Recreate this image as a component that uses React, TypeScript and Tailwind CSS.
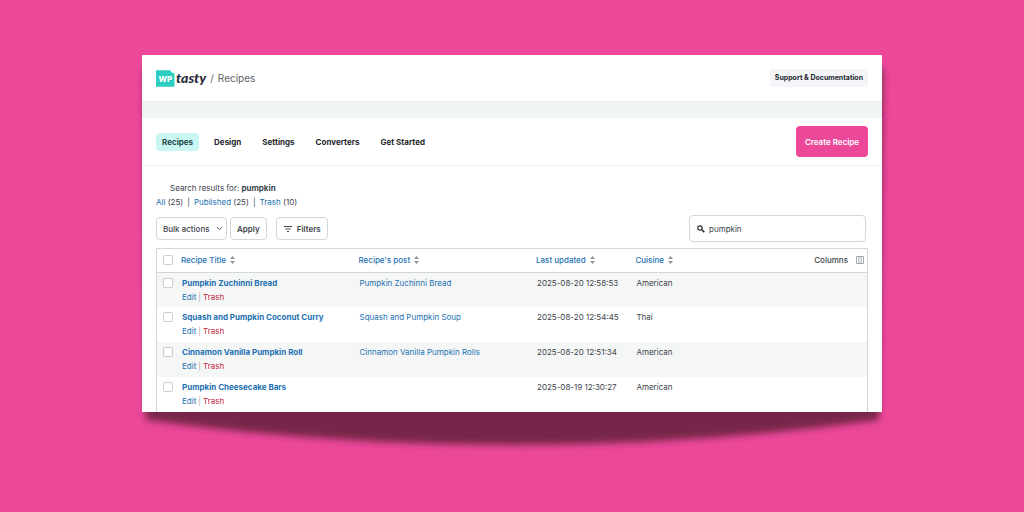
import { useState } from "react";
import { ChevronDown } from "lucide-react";

type Recipe = { title: string; post: string; updated: string; cuisine: string };

const recipes: Recipe[] = [
  { title: "Pumpkin Zuchinni Bread", post: "Pumpkin Zuchinni Bread", updated: "2025-08-20 12:58:53", cuisine: "American" },
  { title: "Squash and Pumpkin Coconut Curry", post: "Squash and Pumpkin Soup", updated: "2025-08-20 12:54:45", cuisine: "Thai" },
  { title: "Cinnamon Vanilla Pumpkin Roll", post: "Cinnamon Vanilla Pumpkin Rolls", updated: "2025-08-20 12:51:34", cuisine: "American" },
  { title: "Pumpkin Cheesecake Bars", post: "", updated: "2025-08-19 12:30:27", cuisine: "American" },
];

const tabs = ["Recipes", "Design", "Settings", "Converters", "Get Started"];

function Logo() {
  return (
    <a href="#home" aria-label="WP Tasty" className="flex items-center gap-px">
      <svg width="19" height="17" viewBox="0 0 19 17" aria-hidden="true">
        <path d="M0 .2H14.500Q15.200 3 18.500 3.400V16.800H0Z" fill="#2bcdc1" />
        <text x="9.300" y="12" textAnchor="middle" fontFamily="Inter, sans-serif" fontSize="8" fontWeight="800" fill="#fff">
          WP
        </text>
      </svg>
      <span className="font-[Lato,sans-serif] text-[14px] leading-4 font-black text-[#2b2b3c] italic">tasty</span>
    </a>
  );
}

function SortIcon() {
  return (
    <svg width="5" height="8" viewBox="0 0 5 8" aria-hidden="true" className="fill-[#8f959b]">
      <path d="M2.500 0L5 3H0ZM2.500 8L0 5H5Z" />
    </svg>
  );
}

function SortHeader({ label }: { label: string }) {
  return (
    <th scope="col" className="p-0 text-left font-medium">
      <button type="button" className="flex items-center gap-1 text-[#2271b1]">
        {label}
        <SortIcon />
      </button>
    </th>
  );
}

function Check({ label }: { label: string }) {
  return (
    <input
      type="checkbox"
      aria-label={label}
      className="block size-[10px] appearance-none rounded-[2px] border border-[#c9cdd1] bg-white checked:bg-[#2271b1]"
    />
  );
}

export default function App() {
  const [query, setQuery] = useState("pumpkin");

  return (
    <div className="min-h-screen bg-[#ec4899] px-[142px] pt-[55px] pb-[100px] font-[Inter,sans-serif] text-[8px] leading-3 text-[#3c434a]">
      <div className="relative isolate">
        <svg
          aria-hidden="true"
          className="absolute inset-0 -z-10 size-full overflow-visible"
          viewBox="0 0 740 357"
          preserveAspectRatio="none"
        >
          <defs>
            <filter id="soft" x="-10%" y="-10%" width="120%" height="130%">
              <feGaussianBlur stdDeviation="3.500" />
            </filter>
          </defs>
          <path d="M2 14H741L737 365Q555 390 370 390Q185 390 4 365Z" fill="#77254a" filter="url(#soft)" />
        </svg>

        <main className="bg-white">
          <header className="flex h-[47px] items-center justify-between border-b border-[#eceeef] px-[14px]">
            <div className="flex items-center gap-1">
              <Logo />
              <span className="text-[10px] text-[#5c636a]">/</span>
              <span className="text-[10px] text-[#5c636a]">Recipes</span>
            </div>
            <a href="#support" className="rounded-[2px] bg-[#f3f5f8] px-[5px] py-[3px] text-[7px] font-bold text-[#23282d]">
              Support &amp; Documentation
            </a>
          </header>

          <div className="h-4 bg-[#f1f4f4]" />

          <div className="flex h-[48px] items-center justify-between border-b border-[#eceeef] px-[14px]">
            <nav className="flex items-center gap-[21px] font-bold text-[#23282d]">
              {tabs.map((tab, i) => (
                <a
                  key={tab}
                  href="#tab"
                  aria-current={i === 0 ? "page" : undefined}
                  className={i === 0 ? "-mr-1.5 rounded-[4px] bg-[#c9f6f1] px-1.5 py-[3px] text-[#1e4a4a]" : "py-[3px]"}
                >
                  {tab}
                </a>
              ))}
            </nav>
            <button type="button" className="h-[31px] rounded-[4px] bg-[#ec4899] px-[9px] font-semibold text-white">
              Create Recipe
            </button>
          </div>

          <section className="px-[14px] pt-4">
            <p className="pl-[14px]">
              Search results for: <b className="font-bold">pumpkin</b>
            </p>
            <ul className="mt-[2px] flex gap-1">
              <li><a href="#all" className="text-[#2271b1]">All</a> (25)</li>
              <li aria-hidden="true">|</li>
              <li><a href="#published" className="text-[#2271b1]">Published</a> (25)</li>
              <li aria-hidden="true">|</li>
              <li><a href="#trash" className="text-[#2271b1]">Trash</a> (10)</li>
            </ul>

            <div className="mt-[7px] flex items-center justify-between pr-[2px]">
              <div className="flex items-center gap-[3px]">
                <div className="relative">
                  <select aria-label="Bulk actions" className="block h-[23px] w-[71px] appearance-none rounded-[4px] border border-[#d3d6d9] bg-white pl-1.5 font-medium">
                    <option>Bulk actions</option>
                  </select>
                  <ChevronDown size={9} strokeWidth={2.5} className="pointer-events-none absolute top-[7px] right-[3px]" />
                </div>
                <button type="button" className="h-[23px] rounded-[4px] border border-[#d3d6d9] px-1.5 font-semibold">
                  Apply
                </button>
                <button type="button" className="ml-1.5 flex h-[23px] items-center gap-1 rounded-[4px] border border-[#d3d6d9] px-1.5 font-semibold">
                  <svg width="10" height="8" viewBox="0 0 10 8" aria-hidden="true" className="stroke-[#3c434a]">
                    <path d="M1 1.500H9M2.500 4H7.500M4 6.500H6" />
                  </svg>
                  Filters
                </button>
              </div>
              <label className="flex h-[27px] w-[177px] items-center gap-1 rounded-[4px] border border-[#d3d6d9] px-[7px]">
                <svg width="8" height="8" viewBox="0 0 8 8" aria-hidden="true" className="fill-none stroke-[#23282d]">
                  <circle cx="3" cy="3" r="2.200" strokeWidth="1.200" />
                  <path d="M4.800 4.800L7.300 7.300" strokeWidth="1.600" />
                </svg>
                <input
                  type="text"
                  aria-label="Search recipes"
                  value={query}
                  onChange={(e) => setQuery(e.target.value)}
                  className="min-w-0 flex-1 outline-none"
                />
              </label>
            </div>

            <div className="mt-1.5 border border-b-0 border-[#d3d6d9]">
              <table className="w-full table-fixed border-collapse">
                <colgroup>
                  <col className="w-[24px]" />
                  <col className="w-[25%]" />
                  <col className="w-[25%]" />
                  <col className="w-[14%]" />
                  <col />
                  <col className="w-[60px]" />
                </colgroup>
                <thead>
                  <tr className="h-[23px] border-b border-[#d3d6d9]">
                    <th scope="col" className="p-0 pl-[6px]">
                      <Check label="Select all" />
                    </th>
                    <SortHeader label="Recipe Title" />
                    <SortHeader label="Recipe's post" />
                    <SortHeader label="Last updated" />
                    <SortHeader label="Cuisine" />
                    <th scope="col" className="p-0 pr-[3px] font-medium">
                      <button type="button" className="ml-auto flex items-center gap-2">
                        Columns
                        <svg width="8" height="8" viewBox="0 0 8 8" aria-hidden="true" className="fill-none stroke-[#8f959b]">
                          <path d="M.5 .5H7.500V7.500H.5ZM2.900 .5V7.500M5.200 .5V7.500" strokeWidth=".8" />
                        </svg>
                      </button>
                    </th>
                  </tr>
                </thead>
                <tbody>
                  {recipes.map((r) => (
                    <tr key={r.title} className="h-[35px] align-top odd:bg-[#f5f7f7]">
                      <td className="p-0 pt-[5px] pl-[6px]">
                        <Check label={`Select ${r.title}`} />
                      </td>
                      <td className="p-0 pt-1 pl-px">
                        <a href="#recipe" className="block font-bold text-[#2271b1]">{r.title}</a>
                        <div className="mt-[2px] flex gap-[2px]">
                          <a href="#edit" className="text-[#2271b1]">Edit</a>
                          <span className="text-[#a7aaad]">|</span>
                          <button type="button" className="text-[#c5283d]">Trash</button>
                        </div>
                      </td>
                      <td className="p-0 pt-1 pl-px">
                        <a href="#post" className="block text-[#2271b1]">{r.post}</a>
                      </td>
                      <td className="p-0 pt-1 pl-px">{r.updated}</td>
                      <td className="p-0 pt-1 pl-px">{r.cuisine}</td>
                      <td className="p-0" />
                    </tr>
                  ))}
                </tbody>
              </table>
            </div>
          </section>
        </main>
      </div>
    </div>
  );
}
